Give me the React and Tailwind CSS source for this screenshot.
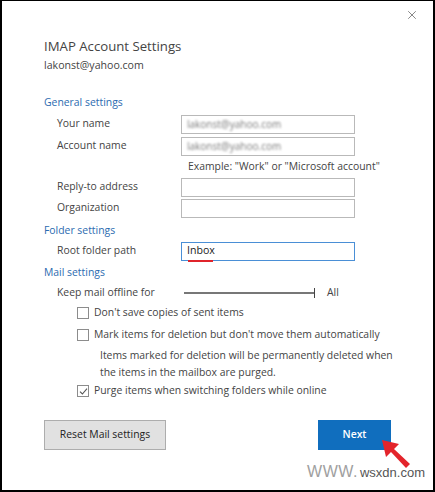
import { X } from "lucide-react";

const font = { fontFamily: '"Open Sans", "Noto Sans", sans-serif' };

const SectionTitle = ({ children, className = "" }) => (
  <div className={`h-[20px] flex items-center text-[10.4px] text-[#2b6bb0] ${className}`}>
    {children}
  </div>
);

const Field = ({ label, children, focused = false, h = "h-[22px]" }) => (
  <div className={`${h} flex items-center pl-[13px]`}>
    <div className="w-[124px] text-[10.4px] text-[#444]">{label}</div>
    <div
      className={`w-[174px] h-[19px] flex items-center px-[5px] bg-white border ${
        focused ? "border-[#4a8fd6]" : "border-[#b9b9b9]"
      }`}
    >
      {children}
    </div>
  </div>
);

const Blurred = ({ children }) => (
  <span className="text-[10px] text-[#7a7a7a] blur-[1.2px] select-none">{children}</span>
);

const Checkbox = ({ checked, label, className = "" }) => (
  <div className={`h-[20px] flex items-center pl-[33px] ${className}`}>
    <div className="w-[12px] h-[12px] border border-[#8c8c8c] bg-white flex items-center justify-center">
      {checked && (
        <svg width="9" height="9" viewBox="0 0 9 9">
          <path d="M1 4.6 L3.4 7 L8 1.6" fill="none" stroke="#555" strokeWidth="1.1" />
        </svg>
      )}
    </div>
    <span className="ml-[5px] text-[10.4px] text-[#444]">{label}</span>
  </div>
);

export default function App() {
  return (
    <div
      style={font}
      className="relative w-[435px] h-[492px] bg-white border-x-2 border-b-2 border-t border-black overflow-hidden"
    >
      <div className="h-[27px] flex justify-end items-center pr-[14px] pt-[1px]">
        <X className="w-[14px] h-[14px] text-[#555]" strokeWidth={1.2} />
      </div>

      <div className="pl-[42px]">
        <div className="mt-[9px] h-[20px] flex items-center text-[13.2px] text-[#444]">
          IMAP Account Settings
        </div>
        <div className="mt-[1px] h-[16px] flex items-center text-[10.6px] text-[#444]">
          lakonst@yahoo.com
        </div>

        <SectionTitle className="mt-[19px]">General settings</SectionTitle>
        <Field label="Your name">
          <Blurred>lakonst@yahoo.com</Blurred>
        </Field>
        <Field label="Account name">
          <Blurred>lakonst@yahoo.com</Blurred>
        </Field>
        <div className="h-[20px] flex items-center pl-[144px] text-[10.4px] text-[#444]">
          Example: "Work" or "Microsoft account"
        </div>
        <Field label="Reply-to address" h="h-[20px]" />
        <Field label="Organization" />

        <SectionTitle className="mt-[2px]">Folder settings</SectionTitle>
        <Field label="Root folder path" focused h="h-[20px]">
          <span className="relative text-[10.6px] text-[#222]">
            Inbox
            <span className="absolute left-[1px] right-[2px] -bottom-[3px] h-[1.5px] bg-[#e0242b]" />
          </span>
        </Field>

        <SectionTitle className="mt-[2px]">Mail settings</SectionTitle>
        <div className="h-[20px] flex items-center pl-[13px]">
          <div className="w-[127px] text-[10.4px] text-[#444]">Keep mail offline for</div>
          <div className="w-[131px] h-[2px] bg-[#777] relative">
            <div className="absolute right-0 -top-[4px] w-[1px] h-[10px] bg-[#444]" />
          </div>
          <span className="ml-[12px] text-[10.4px] text-[#444]">All</span>
        </div>
        <Checkbox label="Don't save copies of sent items" />
        <Checkbox className="mt-[2px]" label="Mark items for deletion but don't move them automatically" />
        <div className="pl-[56px] pt-[2px] text-[10.4px] leading-[17px] text-[#444]">
          <div>Items marked for deletion will be permanently deleted when</div>
          <div>the items in the mailbox are purged.</div>
        </div>
        <Checkbox checked label="Purge items when switching folders while online" />

        <div className="mt-[19px] flex items-center">
          <button className="w-[122px] h-[30px] bg-[#e1e1e1] border border-[#adadad] text-[10.4px] text-[#222]">
            Reset Mail settings
          </button>
          <button className="ml-[152px] w-[73px] h-[30px] bg-[#106ebe] text-[10.4px] font-semibold text-white">
            Next
          </button>
        </div>
      </div>

      {/* red pointer arrow */}
      <svg className="absolute left-[376px] top-[435px]" width="40" height="40" viewBox="0 0 40 40">
        <polygon points="4,4 21,8 16,13 32,28 28,32 13,16 8,21" fill="#e3242b" />
      </svg>

      <div
        className="absolute right-[8px] bottom-[6px] flex items-baseline"
        style={{ fontFamily: '"Liberation Sans", sans-serif' }}
      >
        <span className="text-[16px] text-[#a0a0a0] tracking-[0.5px]">WWW.</span>
        <span className="text-[13px] text-[#555] ml-[2px]">wsxdn.com</span>
      </div>
    </div>
  );
}
